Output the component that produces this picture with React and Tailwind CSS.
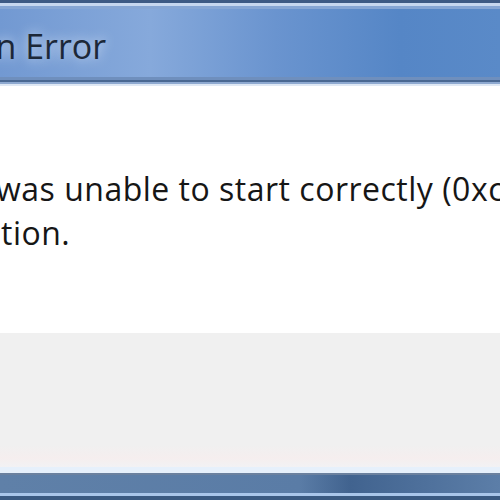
import React from "react";

export default function App() {
  return (
    <div className="w-[500px] h-[500px] overflow-hidden flex flex-col bg-white font-['Open_Sans',sans-serif]">
      {/* window frame top */}
      <div className="h-[3px] shrink-0 bg-[#3d5a84]" />
      <div className="h-[3px] shrink-0 bg-[#c6d7ef]" />
      <div className="h-[3px] shrink-0 bg-[#86a6d4]" />

      {/* title bar */}
      <div className="h-[68px] shrink-0 flex items-center bg-[linear-gradient(90deg,#7299d2_0%,#86a9db_30%,#6a94cf_55%,#5586c6_80%,#5a8ac8_100%)]">
        <span className="ml-[-25px] mt-[6px] text-[34px] font-medium leading-none text-[#1c2838] whitespace-nowrap [text-shadow:0_0_12px_#dfe9f7]">
          on Error
        </span>
      </div>

      {/* title bar bottom edge */}
      <div className="h-[3px] shrink-0 bg-[#6f8fbd]" />
      <div className="h-[2px] shrink-0 bg-[#4a6892]" />
      <div className="h-[2px] shrink-0 bg-[#8ea9d0]" />
      <div className="h-[2px] shrink-0 bg-[#dfe8f4]" />

      {/* message area */}
      <div className="h-[247px] shrink-0 bg-white pt-[81px] text-[32px] font-medium tracking-[0.5px] leading-[44px] text-[#161616]">
        <div className="ml-[-4px] whitespace-nowrap">was unable to start correctly (0xc000007b).</div>
        <div className="ml-[1px] whitespace-nowrap">tion.</div>
      </div>

      {/* button strip */}
      <div className="h-[112px] shrink-0 bg-[#f0f0f0]" />
      <div className="h-[22px] shrink-0 bg-[linear-gradient(180deg,#f0f0f0,#f5eeee_60%,#f2f2f4)]" />
      <div className="h-[6px] shrink-0 bg-[#e6f0fb]" />

      {/* window frame bottom */}
      <div className="h-[2px] shrink-0 bg-[#6b819f]" />
      <div className="h-[18px] shrink-0 bg-[linear-gradient(90deg,#5f80a8,#5a7ca6_60%,#41638f_70%,#5c7ea8)]" />
      <div className="h-[3px] shrink-0 bg-[#a9c6ea]" />
      <div className="flex-1 bg-[#3a5a82]" />
    </div>
  );
}
